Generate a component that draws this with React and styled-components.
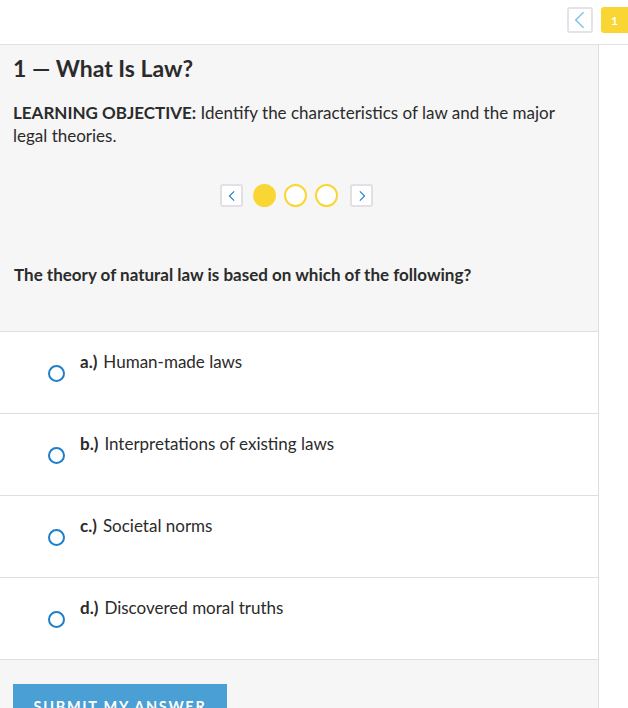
import React, { useState } from 'react';
import styled, { createGlobalStyle } from 'styled-components';

const GlobalStyle = createGlobalStyle`
  html, body {
    margin: 0;
    padding: 0;
    background: #fff;
  }
  body {
    font-family: Lato, "Liberation Sans", sans-serif;
    color: #2b2b2b;
  }
`;

const TopBar = styled.div`
  height: 45px;
  border-bottom: 1px solid #e2e2e6;
  display: flex;
  align-items: flex-start;
  justify-content: flex-end;
  gap: 8px;
  padding-top: 7px;
  box-sizing: border-box;
`;

const BackButton = styled.button`
  width: 26px;
  height: 26px;
  padding: 0;
  border: 2px solid #e4e4e8;
  border-radius: 3px;
  background: #fff;
  display: flex;
  align-items: center;
  justify-content: center;
`;

const Badge = styled.div`
  width: 27px;
  height: 26px;
  border-radius: 3px 0 0 3px;
  background: #fad635;
  color: #fff;
  font-weight: 700;
  font-size: 12px;
  display: flex;
  align-items: center;
  justify-content: center;
`;

const Body = styled.div`
  display: flex;
`;

const Main = styled.div`
  width: 598px;
  border-right: 1px solid #dedee2;
  background: #f6f6f6;
`;

const Header = styled.div`
  padding: 9px 13px 0;
  height: 287px;
  box-sizing: border-box;
  border-bottom: 1px solid #dedee2;
`;

const Title = styled.h1`
  margin: 0;
  font-size: 23px;
  line-height: 28px;
  font-weight: 700;
  color: #2b2b2b;
`;

const Objective = styled.p`
  margin: 19px 0 0;
  font-size: 17px;
  line-height: 23px;
  strong {
    font-weight: 700;
  }
`;

const Pager = styled.div`
  display: flex;
  align-items: center;
  margin-top: 37px;
  padding-left: 207px;
`;

const PagerArrow = styled.button`
  width: 23px;
  height: 23px;
  padding: 0;
  border: 2px solid #e0e0e5;
  border-radius: 3px;
  background: #fff;
  display: flex;
  align-items: center;
  justify-content: center;
  margin: ${(p) => (p.$side === 'left' ? '0 10px 0 0' : '0 0 0 12px')};
`;

const Dot = styled.span`
  width: 23px;
  height: 23px;
  border-radius: 50%;
  box-sizing: border-box;
  border: 2px solid #fad635;
  background: ${(p) => (p.$active ? '#fad635' : '#fff')};
  & + & {
    margin-left: 8px;
  }
`;

const Question = styled.p`
  margin: 57px 0 0;
  padding-left: 1px;
  font-size: 17px;
  line-height: 22px;
  font-weight: 700;
`;

const Options = styled.div`
  background: #fff;
`;

const Option = styled.label`
  display: flex;
  height: 82px;
  box-sizing: border-box;
  border-bottom: 1px solid #dedee2;
  padding: 19px 0 0 48px;
  cursor: pointer;
`;

const Radio = styled.span`
  width: 17px;
  height: 17px;
  margin-top: 14px;
  border-radius: 50%;
  box-sizing: border-box;
  border: 2px solid #1d7fcc;
  flex-shrink: 0;
  background: ${(p) => (p.$checked ? 'radial-gradient(#1d7fcc 40%, #fff 45%)' : '#fff')};
`;

const OptionText = styled.span`
  margin-left: 15px;
  font-size: 17px;
  line-height: 22px;
  color: #2b2b2b;
  b {
    font-weight: 700;
    margin-right: 6px;
  }
`;

const Footer = styled.div`
  padding: 24px 13px 30px;
`;

const SubmitButton = styled.button`
  width: 214px;
  height: 48px;
  border: none;
  background: #4a9fd5;
  color: #fff;
  font-family: Lato, "Liberation Sans", sans-serif;
  font-weight: 700;
  font-size: 14.5px;
  letter-spacing: 1.7px;
  text-transform: uppercase;
  padding: 0 0 4px;
`;

const Side = styled.div`
  flex: 1;
  background: #fff;
`;

const Chevron = ({ dir = 'left', size = 14, color = '#1d7fcc', weight = 1.3 }) => (
  <svg width={size} height={size} viewBox="0 0 14 14" fill="none">
    <path
      d={dir === 'left' ? 'M9.5 1.5 L4 7 L9.5 12.5' : 'M4.5 1.5 L10 7 L4.5 12.5'}
      stroke={color}
      strokeWidth={weight}
    />
  </svg>
);

const answers = [
  { key: 'a', text: 'Human-made laws' },
  { key: 'b', text: 'Interpretations of existing laws' },
  { key: 'c', text: 'Societal norms' },
  { key: 'd', text: 'Discovered moral truths' },
];

export default function App() {
  const [selected, setSelected] = useState(null);
  return (
    <>
      <GlobalStyle />
      <TopBar>
        <BackButton aria-label="Back">
          <Chevron size={20} color="#7cc1ea" weight={1} />
        </BackButton>
        <Badge>1</Badge>
      </TopBar>
      <Body>
        <Main>
          <Header>
            <Title>1 — What Is Law?</Title>
            <Objective>
              <strong>LEARNING OBJECTIVE:</strong> Identify the characteristics of law and the major
              legal theories.
            </Objective>
            <Pager>
              <PagerArrow $side="left" aria-label="Previous">
                <Chevron size={12} />
              </PagerArrow>
              <Dot $active />
              <Dot />
              <Dot />
              <PagerArrow $side="right" aria-label="Next">
                <Chevron dir="right" size={12} />
              </PagerArrow>
            </Pager>
            <Question>The theory of natural law is based on which of the following?</Question>
          </Header>
          <Options>
            {answers.map((a) => (
              <Option key={a.key} onClick={() => setSelected(a.key)}>
                <Radio $checked={selected === a.key} />
                <OptionText>
                  <b>{a.key}.)</b>
                  {a.text}
                </OptionText>
              </Option>
            ))}
          </Options>
          <Footer>
            <SubmitButton>Submit my answer</SubmitButton>
          </Footer>
        </Main>
        <Side />
      </Body>
    </>
  );
}
